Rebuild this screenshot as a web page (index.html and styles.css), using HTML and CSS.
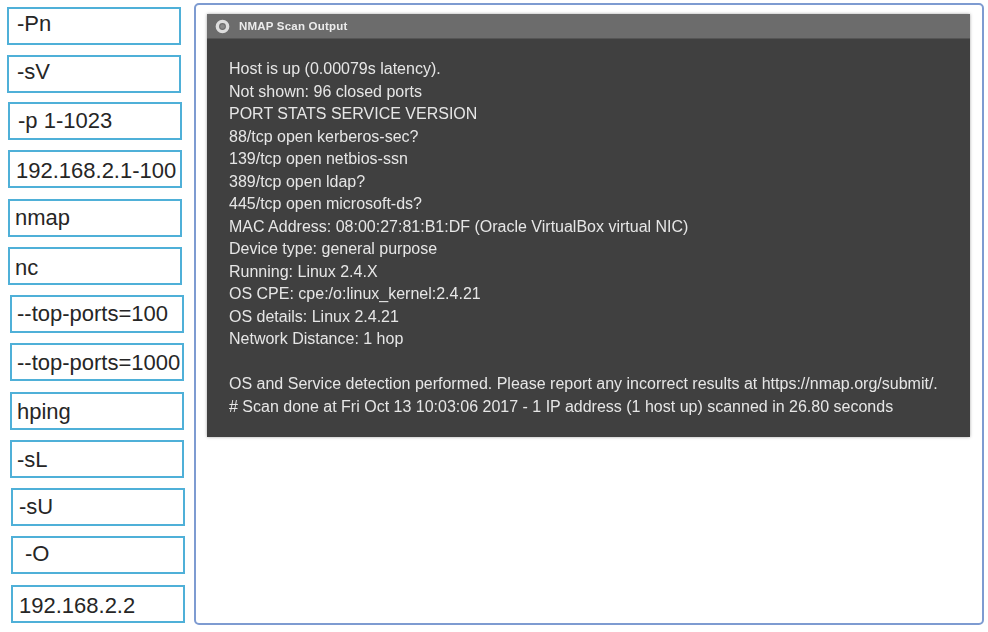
FILE: index.html
```html
<!DOCTYPE html>
<html lang="en">
<head>
<meta charset="utf-8">
<title>NMAP Scan Output</title>
<link rel="stylesheet" href="styles.css">
</head>
<body>
<div class="page">
  <div class="options">
    <div class="chip c1 g0 lh29 p8">-Pn</div>
    <div class="chip c1 g1 lh29 p8">-sV</div>
    <div class="chip c2 g0b lh34 p8">-p 1-1023</div>
    <div class="chip c2 g1 lh38 p6">192.168.2.1-100</div>
    <div class="chip c2 g2 lh34 p5">nmap</div>
    <div class="chip c2 g1 lh38 p5">nc</div>
    <div class="chip c3 g1 lh34 p5">--top-ports=100</div>
    <div class="chip c3 g1 lh36 p5">--top-ports=1000</div>
    <div class="chip c3 g2 lh36 p5">hping</div>
    <div class="chip c3 g1 lh36 p5">-sL</div>
    <div class="chip c4 g1 lh34 p6">-sU</div>
    <div class="chip c4 g1 lh32 p12">-O</div>
    <div class="chip c4 g2 lh38 p6">192.168.2.2</div>
  </div>
  <div class="panel">
    <div class="terminal">
      <div class="titlebar">
        <svg class="logo" viewBox="0 0 14 14" aria-hidden="true"><circle cx="7" cy="7" r="4.8" fill="none" stroke="#dedede" stroke-width="3.2"/><circle cx="7" cy="7" r="2.2" fill="#8a8a8a"/></svg>
        <span class="title">NMAP Scan Output</span>
      </div>
      <div class="output">
        <p>Host is up (0.00079s latency).</p>
        <p>Not shown: 96 closed ports</p>
        <p>PORT STATS SERVICE VERSION</p>
        <p>88/tcp open kerberos-sec?</p>
        <p>139/tcp open netbios-ssn</p>
        <p>389/tcp open ldap?</p>
        <p>445/tcp open microsoft-ds?</p>
        <p>MAC Address: 08:00:27:81:B1:DF (Oracle VirtualBox virtual NIC)</p>
        <p>Device type: general purpose</p>
        <p>Running: Linux 2.4.X</p>
        <p>OS CPE: cpe:/o:linux_kernel:2.4.21</p>
        <p>OS details: Linux 2.4.21</p>
        <p>Network Distance: 1 hop</p>
        <p class="blank">&nbsp;</p>
        <p>OS and Service detection performed. Please report any incorrect results at https://nmap.org/submit/.</p>
        <p># Scan done at Fri Oct 13 10:03:06 2017 - 1 IP address (1 host up) scanned in 26.80 seconds</p>
      </div>
    </div>
  </div>
</div>
</body>
</html>
```

FILE: styles.css
```css
* { box-sizing: border-box; }
html, body { margin: 0; padding: 0; background: #fff; }
body { width: 988px; height: 632px; overflow: hidden; font-family: "Liberation Sans", Arial, sans-serif; }
.page { display: flex; align-items: flex-start; padding: 3px 4px 0 0; }
.options { display: flex; flex-direction: column; width: 194px; padding-top: 4px; flex: none; }
.chip {
  width: 174px; height: 38px; border: 2px solid #4fb0d8; background: #fff;
  color: #262626; font-size: 22px; white-space: nowrap; overflow: hidden;
}
.lh29 { line-height: 29px; }
.lh32 { line-height: 32px; }
.lh34 { line-height: 34px; }
.lh36 { line-height: 36px; }
.lh38 { line-height: 38px; }
.p5 { padding-left: 5px; }
.p6 { padding-left: 6px; }
.p8 { padding-left: 8px; }
.p12 { padding-left: 12px; }
.c1 { margin-left: 7px; }
.c2 { margin-left: 8px; }
.c3 { margin-left: 10px; }
.c4 { margin-left: 11px; }
.g0 { margin-top: 0; }
.g0b { margin-top: 9px; }
.g1 { margin-top: 10px; }
.g2 { margin-top: 11px; }
.panel {
  width: 790px; height: 622px; border: 2px solid #7e9bd1; border-radius: 5px;
  padding: 9px 12px 0 11px; background: #fff;
}
.terminal { background: #404040; height: 423px; box-shadow: 0 0 3px rgba(0,0,0,.35); }
.titlebar {
  height: 25px; display: flex; align-items: center; gap: 9px; padding-left: 8px;
  background: #6c6c6c; border-bottom: 1px solid #555;
}
.logo { width: 15px; height: 15px; flex: none; filter: blur(.4px); }
.title { color: #ececec; font-size: 11.5px; font-weight: 700; letter-spacing: .2px; filter: blur(.3px); }
.output { padding: 19px 0 0 22px; color: #e6e6e6; font-size: 16px; line-height: 22.5px; filter: blur(.35px); white-space: nowrap; }
.output p { margin: 0; }
```
